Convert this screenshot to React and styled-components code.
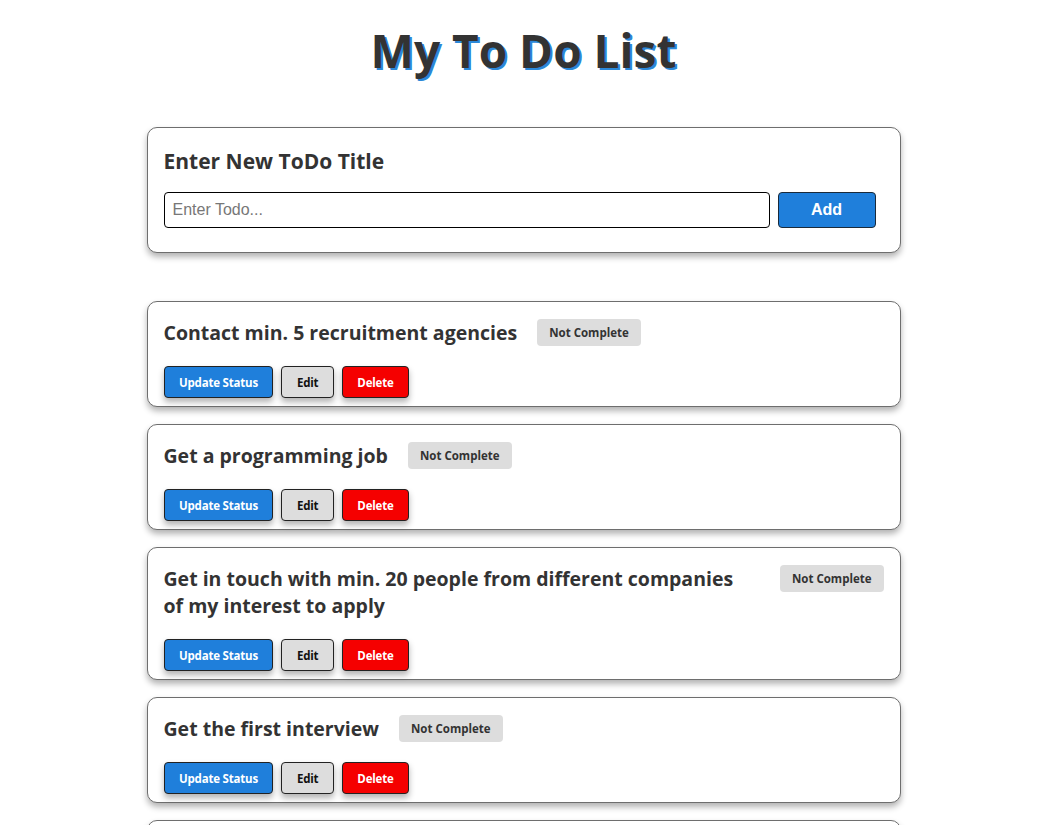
import styled, { createGlobalStyle } from "styled-components";

const GlobalStyle = createGlobalStyle`
  body {
    margin: 0;
    background: #fff;
    font-family: "Open Sans", "Noto Sans", sans-serif;
    color: #333;
  }
`;

const todos = [
  "Contact min. 5 recruitment agencies",
  "Get a programming job",
  "Get in touch with min. 20 people from different companies of my interest to apply",
  "Get the first interview",
  "Prepare for the interview",
];

const Page = styled.div`
  width: 754px;
  margin: 0 auto;
  padding-top: 18px;
`;

const Title = styled.h1`
  margin: 0 0 45px;
  text-align: center;
  font-size: 46px;
  line-height: 64px;
  font-weight: 700;
  color: #333;
  text-shadow: 2px 2px 0 #2b88d8;
`;

const Card = styled.div`
  border: 1px solid #6e6e6e;
  border-radius: 10px;
  box-shadow: 0 4px 6px rgba(0, 0, 0, 0.3);
  background: #fff;
  padding: ${(p) => p.$pad || "17px 16px 8px"};
  margin-bottom: ${(p) => p.$gap || "17px"};
`;

const FormTitle = styled.h2`
  margin: 0 0 16px;
  font-size: 21px;
  line-height: 30px;
  font-weight: 700;
  color: #333;
`;

const Row = styled.div`
  display: flex;
  gap: 8px;
  padding-right: 8px;
`;

const Input = styled.input`
  flex: 1;
  height: 36px;
  box-sizing: border-box;
  border: 1px solid #000;
  border-radius: 4px;
  padding: 0 8px;
  font-family: "Liberation Sans", Arial, sans-serif;
  font-size: 16px;
  &::placeholder {
    color: #777;
  }
`;

const AddButton = styled.button`
  width: 98px;
  height: 36px;
  background: #1f7fdb;
  color: #fff;
  border: 1px solid #1a2a3a;
  border-radius: 4px;
  font-family: "Liberation Sans", Arial, sans-serif;
  font-weight: 700;
  font-size: 16px;
`;

const Header = styled.div`
  display: flex;
  align-items: flex-start;
  justify-content: space-between;
  gap: 20px;
  margin-bottom: 20px;
`;

const TitleGroup = styled.div`
  display: flex;
  align-items: flex-start;
  gap: 20px;
`;

const TodoTitle = styled.h3`
  margin: 0;
  max-width: 585px;
  font-size: 19.5px;
  line-height: 27px;
  font-weight: 700;
  color: #333;
`;

const Badge = styled.span`
  flex-shrink: 0;
  height: 27px;
  line-height: 27px;
  padding: 0 12px;
  background: #ddd;
  border-radius: 4px;
  font-size: 11.5px;
  font-weight: 700;
  color: #333;
`;

const Actions = styled.div`
  display: flex;
  gap: 8px;
`;

const colors = {
  blue: ["#1f7fdb", "#fff"],
  grey: ["#ddd", "#111"],
  red: ["#f50000", "#fff"],
};

const Button = styled.button`
  height: 32px;
  padding: 0 14.5px;
  border: 1px solid #222;
  border-radius: 4px;
  background: ${(p) => colors[p.$kind][0]};
  color: ${(p) => colors[p.$kind][1]};
  box-shadow: 0 4px 6px rgba(0, 0, 0, 0.3);
  font-family: "Open Sans", sans-serif;
  font-size: 11.5px;
  font-weight: 700;
  letter-spacing: -0.2px;
`;

export default function App() {
  return (
    <>
      <GlobalStyle />
      <Page>
        <Title>My To Do List</Title>
        <Card $pad="18px 16px 24px" $gap="48px">
          <FormTitle>Enter New ToDo Title</FormTitle>
          <Row>
            <Input placeholder="Enter Todo..." />
            <AddButton>Add</AddButton>
          </Row>
        </Card>
        {todos.map((t) => {
          const long = t.length > 60;
          return (
            <Card key={t}>
              {long ? (
                <Header>
                  <TodoTitle>{t}</TodoTitle>
                  <Badge>Not Complete</Badge>
                </Header>
              ) : (
                <Header>
                  <TitleGroup>
                    <TodoTitle>{t}</TodoTitle>
                    <Badge>Not Complete</Badge>
                  </TitleGroup>
                </Header>
              )}
              <Actions>
                <Button $kind="blue">Update Status</Button>
                <Button $kind="grey">Edit</Button>
                <Button $kind="red">Delete</Button>
              </Actions>
            </Card>
          );
        })}
      </Page>
    </>
  );
}
